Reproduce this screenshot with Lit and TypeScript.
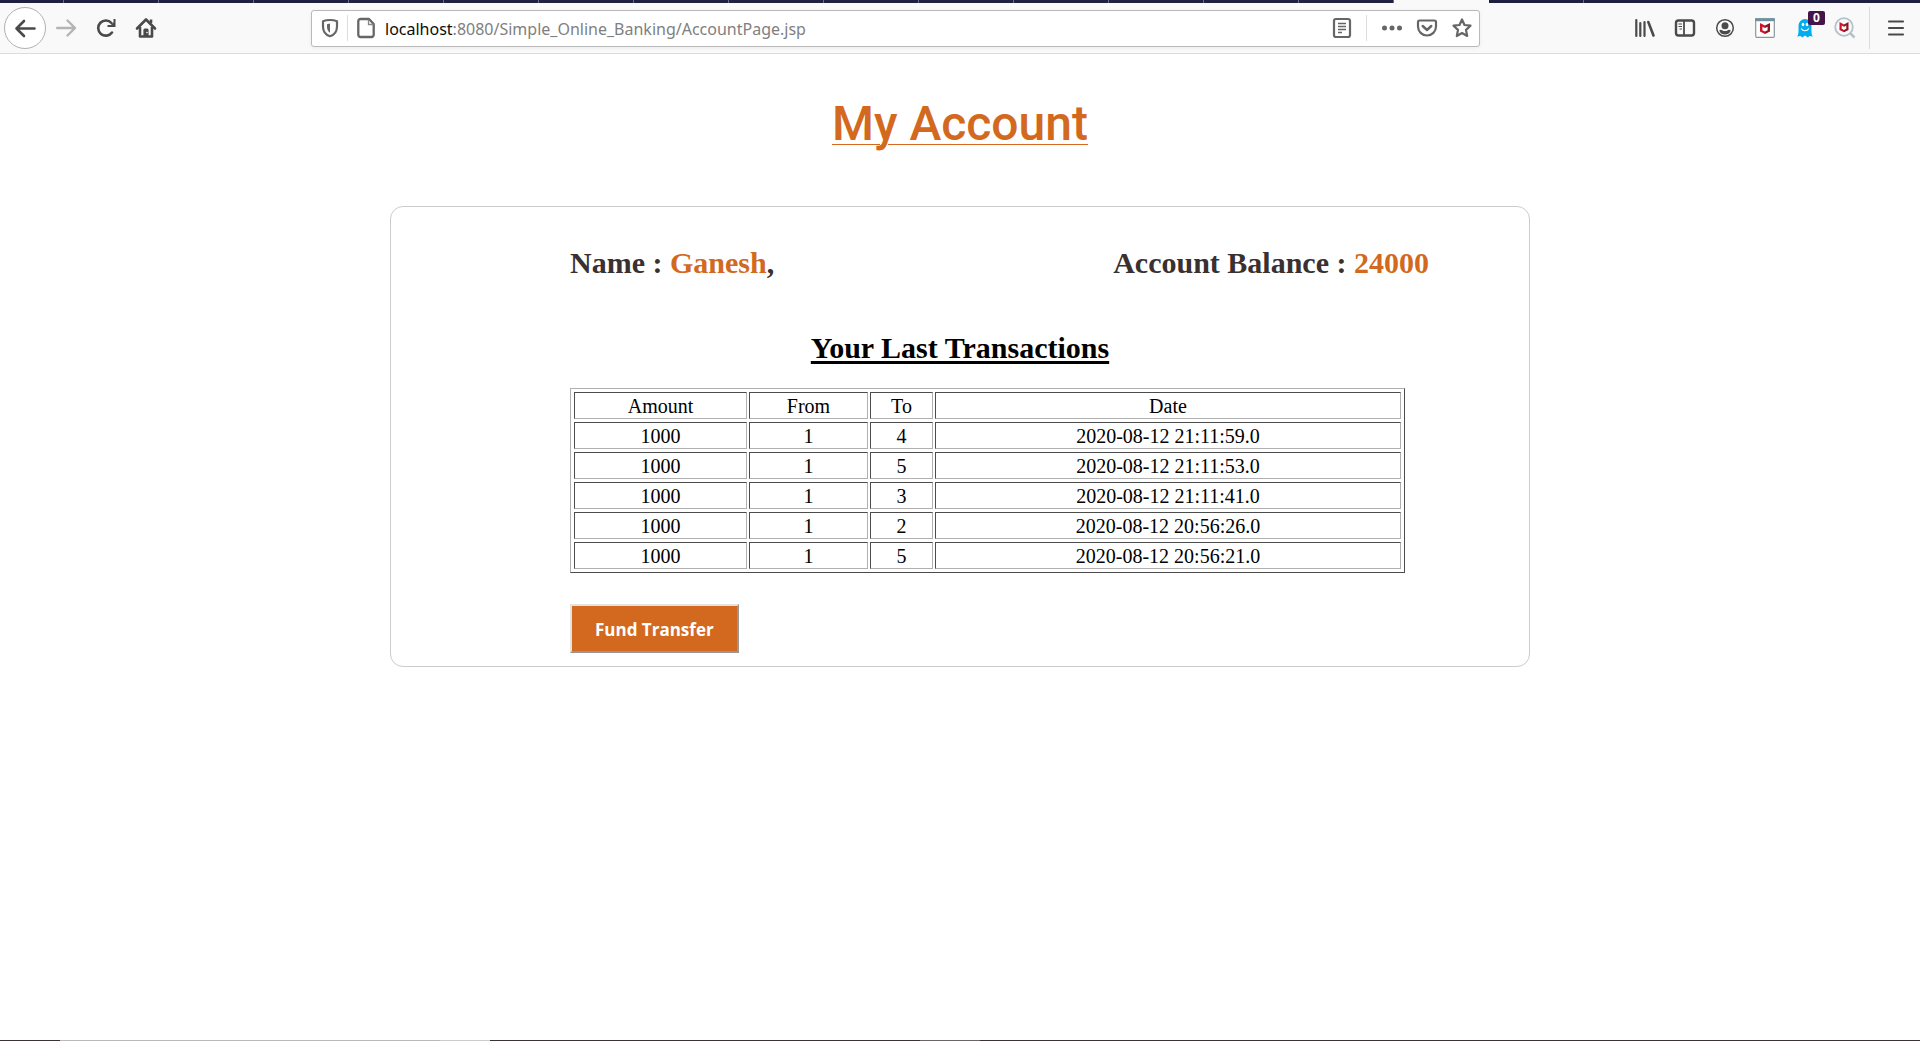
import { LitElement, html, css, svg } from "lit";
import { customElement } from "lit/decorators.js";

interface Transaction {
  amount: string;
  from: string;
  to: string;
  date: string;
}

const TRANSACTIONS: Transaction[] = [
  { amount: "1000", from: "1", to: "4", date: "2020-08-12 21:11:59.0" },
  { amount: "1000", from: "1", to: "5", date: "2020-08-12 21:11:53.0" },
  { amount: "1000", from: "1", to: "3", date: "2020-08-12 21:11:41.0" },
  { amount: "1000", from: "1", to: "2", date: "2020-08-12 20:56:26.0" },
  { amount: "1000", from: "1", to: "5", date: "2020-08-12 20:56:21.0" },
];

/* Every icon is drawn round the origin of a 20 x 20 box. */
const ICONS = {
  back: svg`<path d="M9.5 0.5H-8.5M-1 -7L-8.5 0.5L-1 8" fill="none" stroke="#4a4a4a" stroke-width="2.6" stroke-linecap="round" stroke-linejoin="round"/>`,
  forward: svg`<path d="M-8.8 0H8.5M1.5 -7.5L9 0L1.5 7.5" fill="none" stroke="#b4b4b4" stroke-width="2.4" stroke-linecap="round" stroke-linejoin="round"/>`,
  reload: svg`<path d="M5.5 -5A7.6 7.6 0 1 0 6 4.5" fill="none" stroke="#4a4a4a" stroke-width="2.6" stroke-linecap="round"/><path d="M9.5 -9V-1H1.5V-3H5L7.5 -5.5V-9Z" fill="#4a4a4a"/>`,
  home: svg`<path d="M-9 0.5L0 -8.5L9 0.5" fill="none" stroke="#4a4a4a" stroke-width="2.6" stroke-linecap="round" stroke-linejoin="round"/><path d="M-6 -1V8.5H6V-1M5 -8.5V-5" fill="none" stroke="#4a4a4a" stroke-width="2.6" stroke-linejoin="round"/><path d="M-2.6 8.5V2A1.5 1.5 0 0 1 -1 0.5H1A1.5 1.5 0 0 1 2.6 2V8.5Z" fill="#4a4a4a"/><circle cx="1" cy="4.5" r="0.8" fill="#f9f9fa"/>`,
  shield: svg`<path d="M0 -8C3 -8 5.5 -7.4 7 -6.8V-1.5C7 3.5 4 7 0 8.2C-4 7 -7 3.5 -7 -1.5V-6.8C-5.5 -7.4 -3 -8 0 -8Z" fill="none" stroke="#666" stroke-width="2.2" stroke-linejoin="round"/><path d="M0 -4.5V4.8C-2 3.5 -3 1.5 -3 -1V-3.8Z" fill="#666"/>`,
  page: svg`<path d="M3 -9H-5.5A2.2 2.2 0 0 0 -7.7 -6.8V6.8A2.2 2.2 0 0 0 -5.5 9H5.5A2.2 2.2 0 0 0 7.7 6.8V-4Z" fill="none" stroke="#666" stroke-width="2.3" stroke-linejoin="round"/><path d="M2.5 -8.5V-3.5H7.5" fill="none" stroke="#888" stroke-width="1.3"/>`,
  reader: svg`<rect x="-8" y="-9" width="16" height="18" rx="2" fill="none" stroke="#666" stroke-width="2.2"/><path d="M-4 -4.5H4M-4 -1.5H4M-4 1.5H4M-4 4.5H0" stroke="#666" stroke-width="1.3"/>`,
  dots: svg`<g fill="#666"><circle cx="-7.5" r="2.5"/><circle r="2.5"/><circle cx="7.5" r="2.5"/></g>`,
  pocket: svg`<path d="M-7.5 -7.5H7.5A1.5 1.5 0 0 1 9 -6V-1.5A9 9 0 0 1 -9 -1.5V-6A1.5 1.5 0 0 1 -7.5 -7.5Z" fill="none" stroke="#666" stroke-width="2.2"/><path d="M-4.3 -2L0 2L4.3 -2" fill="none" stroke="#666" stroke-width="2.4" stroke-linecap="round" stroke-linejoin="round"/>`,
  star: svg`<path d="M0 -8.5L2.5 -3L8.5 -2.3L4 1.9L5.2 8L0 5L-5.2 8L-4 1.9L-8.5 -2.3L-2.5 -3Z" fill="none" stroke="#666" stroke-width="2.2" stroke-linejoin="round"/>`,
  library: svg`<path d="M-8.7 -8V8M-4.7 -5V8M-0.5 -6V8" stroke="#4a4a4a" stroke-width="2.2" stroke-linecap="round"/><path d="M3.3 -6L8.5 7.5" stroke="#4a4a4a" stroke-width="2.6" stroke-linecap="round"/>`,
  sidebar: svg`<rect x="-9" y="-7.5" width="18" height="15" rx="2.5" fill="none" stroke="#4a4a4a" stroke-width="2.4"/><path d="M-1 -7.5V7.5" stroke="#4a4a4a" stroke-width="1.8"/><path d="M-6.5 -4H-3M-6.5 -1.5H-3M-5.5 1H-3" stroke="#4a4a4a" stroke-width="1.2"/>`,
  account: svg`<circle r="8.3" fill="none" stroke="#4a4a4a" stroke-width="1.5"/><circle cy="-2.3" r="3.5" fill="#4a4a4a"/><path d="M-5.8 2.5C-4 1.5 -3.5 1.8 -2.5 2.5C-1 3.3 1 3.3 2.5 2.5C3.5 1.8 4 1.5 5.8 2.5C4.5 5.5 2.5 6.5 0 6.5S-4.5 5.5 -5.8 2.5Z" fill="#4a4a4a"/>`,
  guard: svg`<rect x="-9.3" y="-9" width="18.6" height="18.3" rx="1" fill="#fff" stroke="#8c979c" stroke-width="1.2"/><path d="M-9.9 -9.9H9.9V-6.8H-9.9Z" fill="#7191a1"/><path d="M-5 -5L0 -2.5V0L-2.6 -1.3V2.2L0 3.4V6L-5 3.4Z" fill="#cf1429"/><path d="M5 -5L0 -2.5V0L2.6 -1.3V2.2L0 3.4V6L5 3.4Z" fill="#8e1420"/>`,
  ghost: svg`<path d="M-8 8.5C-6 6.5 -6.5 3 -6.5 -2.5A6.5 6.5 0 0 1 6.5 -2.5C6.5 3 6 6.5 8 8.5L4.5 8L2.8 9.5L0 7.5L-2.8 9.5L-4.5 8Z" fill="#00aef0"/><ellipse cx="-2" cy="-3.5" rx="1.3" ry="1.8" fill="#fff"/><ellipse cx="2" cy="-3.5" rx="1.3" ry="1.8" fill="#fff"/><path d="M-3.8 0.5C-2 3.5 2 3.5 3.8 0.5" fill="none" stroke="#fff" stroke-width="1.2"/>`,
  search: svg`<circle cx="-1" cy="-1" r="8.8" fill="#f9f9fa" stroke="#b3c1c8" stroke-width="1.8"/><path d="M5.5 5.5L9.5 9.5" stroke="#b3c1c8" stroke-width="2.5"/><path d="M-5.5 -6L-1 -3.6V-1.2L-3.3 -2.4V0.8L-1 1.9V4.3L-5.5 2Z" fill="#cf1429"/><path d="M3.5 -6L-1 -3.6V-1.2L1.3 -2.4V0.8L-1 1.9V4.3L3.5 2Z" fill="#8e1420"/>`,
  menu: svg`<path d="M-7 -6.5H7M-7 0H7M-7 6.5H7" stroke="#4a4a4a" stroke-width="2.2" stroke-linecap="round"/>`,
};

type IconName = keyof typeof ICONS;

const icon = (name: IconName) =>
  html`<svg class="icon" width="20" height="20" viewBox="-10 -10 20 20" aria-hidden="true">${ICONS[name]}</svg>`;

@customElement("browser-toolbar")
export class BrowserToolbar extends LitElement {
  static styles = css`
    :host {
      display: block;
      color: #4a4a4a;
    }
    .tabs {
      display: flex;
      height: 3px;
      overflow: hidden;
      background: #1f2041;
    }
    .tab {
      box-sizing: border-box;
      flex: 0 0 95px;
      border-right: 1px solid #6a6b85;
    }
    .tab.first {
      flex-basis: 64px;
    }
    .tab.active {
      background: #f9f9fa;
      border: 0;
    }
    .bar {
      display: flex;
      align-items: center;
      height: 50px;
      background: #f9f9fa;
      border-bottom: 1px solid #dcdcdc;
      padding: 0 4px;
    }
    button {
      display: grid;
      place-items: center;
      box-sizing: border-box;
      width: 40px;
      height: 40px;
      padding: 0;
      border: 0;
      background: none;
      color: inherit;
    }
    .icon {
      display: block;
      overflow: visible;
    }
    .nav {
      display: flex;
      align-items: center;
      flex: 0 0 307px;
    }
    .nav .back {
      width: 42px;
      height: 42px;
      border: 1px solid #b1b1b3;
      border-radius: 50%;
      background: #fff;
    }
    .address {
      display: flex;
      align-items: center;
      flex: 1;
      box-sizing: border-box;
      min-width: 0;
      height: 37px;
      padding-left: 7px;
      border: 1px solid #b9b9b9;
      border-radius: 3px;
      background: #fff;
      box-shadow: 0 1px 4px rgba(0, 0, 0, 0.06);
    }
    .address button {
      flex: none;
      width: 35px;
    }
    .address .narrow {
      width: 22px;
    }
    .rule {
      flex: none;
      width: 1px;
      height: 26px;
      background: #dcdcdc;
    }
    .rule.start {
      margin-left: 6px;
    }
    .rule.end {
      margin: 0 7px;
    }
    .url {
      flex: 1;
      min-width: 0;
      margin: 0;
      padding: 2px 0 0 2px;
      font: 16px/24px "Noto Sans", "Open Sans", sans-serif;
      color: #808080;
      white-space: nowrap;
      overflow: hidden;
    }
    .host {
      color: #0c0c0d;
    }
    .tools {
      display: flex;
      align-items: center;
      justify-content: flex-end;
      flex: 0 0 436px;
    }
    .tools .rule {
      height: 42px;
      margin: 0 6px 0 4px;
    }
    .ext {
      position: relative;
    }
    .badge {
      position: absolute;
      left: 23px;
      top: 3px;
      width: 17px;
      height: 14px;
      border-radius: 2px;
      background: #45154a;
      color: #fff;
      font: bold 12px/14px "Open Sans", sans-serif;
      text-align: center;
    }
  `;

  private button(name: IconName, label: string, cls = "") {
    return html`<button class=${cls} type="button" aria-label=${label}>${icon(name)}</button>`;
  }

  render() {
    const tabs = Array.from({ length: 14 });
    return html`
      <div class="tabs">
        <div class="tab first"></div>
        ${tabs.map(() => html`<div class="tab"></div>`)}
        <div class="tab active"></div>
        <div class="tab"></div>
      </div>
      <div class="bar">
        <nav class="nav">
          ${this.button("back", "Back", "back")} ${this.button("forward", "Forward")}
          ${this.button("reload", "Reload")} ${this.button("home", "Home")}
        </nav>
        <div class="address">
          ${this.button("shield", "Tracking protection", "narrow")}
          <span class="rule start"></span>
          ${this.button("page", "Site information")}
          <p class="url"><span class="host">localhost</span>:8080/Simple_Online_Banking/AccountPage.jsp</p>
          ${this.button("reader", "Reader view")}
          <span class="rule end"></span>
          ${this.button("dots", "Page actions")} ${this.button("pocket", "Save to Pocket")}
          ${this.button("star", "Bookmark")}
        </div>
        <div class="tools">
          ${this.button("library", "Library")} ${this.button("sidebar", "Sidebars")}
          ${this.button("account", "Account")} ${this.button("guard", "Web protection")}
          <button class="ext" type="button" aria-label="Tracker blocker">
            ${icon("ghost")}<span class="badge">0</span>
          </button>
          ${this.button("search", "Secure search")}
          <span class="rule"></span>
          ${this.button("menu", "Menu")}
        </div>
      </div>
    `;
  }
}

@customElement("account-page")
export class AccountPage extends LitElement {
  static styles = css`
    :host {
      display: block;
      font-family: "Liberation Serif", "Times New Roman", serif;
      font-size: 20px;
      color: #000;
    }
    h1 {
      margin: 0;
      padding: 40px 0 52px;
      font: 500 48px/60px Roboto, sans-serif;
      color: #d2691e;
      text-align: center;
      text-decoration: underline 1px;
      text-underline-offset: 4px;
    }
    .card {
      box-sizing: border-box;
      max-width: 1140px;
      margin: 0 auto;
      padding: 38px 100px 13px 179px;
      border: 1px solid #ccc;
      border-radius: 13px;
    }
    .summary {
      display: flex;
      justify-content: space-between;
      font-size: 30px;
      font-weight: bold;
      line-height: 36px;
      color: #3a3030;
    }
    .summary p {
      margin: 0;
    }
    .value {
      color: #d2691e;
    }
    .statement {
      margin-right: 24px;
    }
    h2 {
      margin: 49px 55px 22px 0;
      font-size: 30px;
      line-height: 36px;
      text-align: center;
      text-decoration: underline 3px;
      text-underline-offset: 3px;
    }
    table {
      width: 100%;
      border: 1px solid;
      border-color: #b0b0b0 #4c4c4c #4c4c4c #b0b0b0;
      border-collapse: separate;
      border-spacing: 2px 3px;
      padding: 0 1px;
      table-layout: fixed;
      text-align: center;
    }
    th,
    td {
      padding: 2px 0 0;
      border: 1px solid;
      border-color: #4c4c4c #b0b0b0 #b0b0b0 #4c4c4c;
      font-weight: normal;
      line-height: 23px;
    }
    .amount {
      width: 171px;
    }
    .from {
      width: 117px;
    }
    .to {
      width: 61px;
    }
    .transfer {
      display: block;
      box-sizing: border-box;
      height: 49px;
      margin-top: 31px;
      padding: 2px 23px 0;
      border: 2px solid;
      border-color: #e3e3e3 #979797 #979797 #e3e3e3;
      background: #d2691e;
      color: #fff;
      font: bold 17px/24px "Open Sans", "Noto Sans", sans-serif;
    }
  `;

  render() {
    return html`
      <h1>My Account</h1>
      <section class="card">
        <div class="summary">
          <p>Name : <span class="value">Ganesh</span>,</p>
          <p>Account Balance : <span class="value">24000</span></p>
        </div>
        <div class="statement">
          <h2>Your Last Transactions</h2>
          <table>
            <thead>
              <tr>
                <th class="amount" scope="col">Amount</th>
                <th class="from" scope="col">From</th>
                <th class="to" scope="col">To</th>
                <th scope="col">Date</th>
              </tr>
            </thead>
            <tbody>
              ${TRANSACTIONS.map(
                (t) => html`<tr>
                  <td>${t.amount}</td>
                  <td>${t.from}</td>
                  <td>${t.to}</td>
                  <td>${t.date}</td>
                </tr>`
              )}
            </tbody>
          </table>
        </div>
        <button class="transfer" type="button">Fund Transfer</button>
      </section>
    `;
  }
}

@customElement("app-root")
export class AppRoot extends LitElement {
  static styles = css`
    :host {
      display: flex;
      flex-direction: column;
      min-height: 100vh;
      background: #fff;
    }
    .page {
      flex: 1;
    }
    .taskbar {
      display: flex;
      height: 1px;
      background: #3a3238;
    }
    .start {
      width: 60px;
    }
    .find {
      width: 380px;
      background: #b9b9b9;
    }
    .mic {
      width: 50px;
      background: #cccccc;
    }
    .apps {
      width: 430px;
    }
    .running {
      width: 60px;
      background: #6a6468;
    }
  `;

  render() {
    return html`
      <browser-toolbar></browser-toolbar>
      <account-page class="page"></account-page>
      <footer class="taskbar">
        <span class="start"></span>
        <span class="find"></span>
        <span class="mic"></span>
        <span class="apps"></span>
        <span class="running"></span>
      </footer>
    `;
  }
}
